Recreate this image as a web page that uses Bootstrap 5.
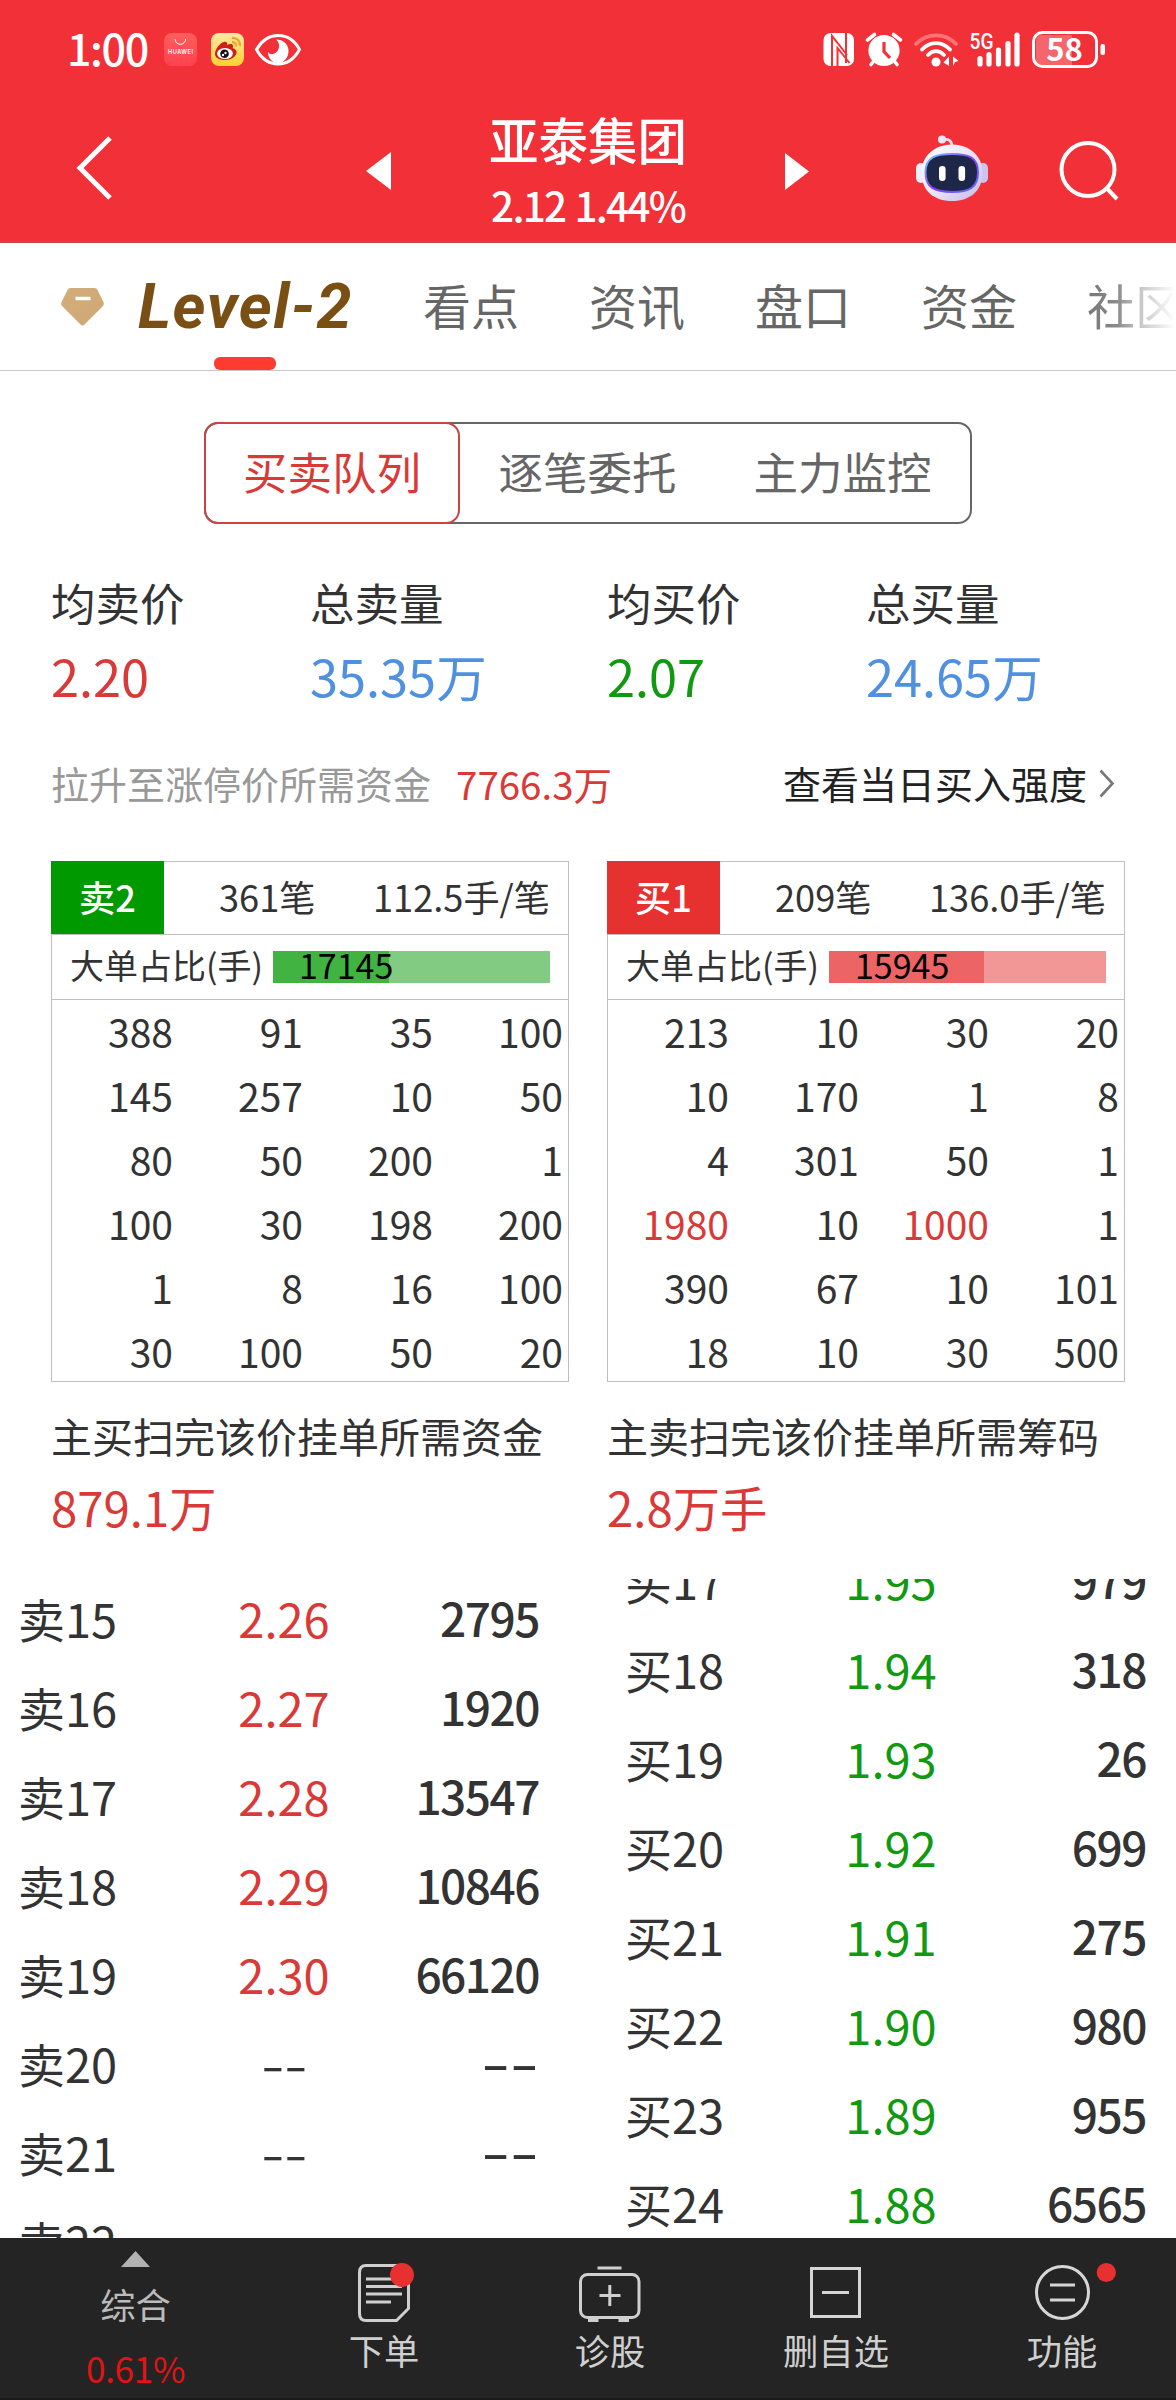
<!DOCTYPE html>
<html lang="zh-CN">
<head>
<meta charset="utf-8">
<meta name="viewport" content="width=device-width, initial-scale=1">
<title>亚泰集团 Level-2</title>
<link href="https://cdn.jsdelivr.net/npm/bootstrap@5.3.0/dist/css/bootstrap.min.css" rel="stylesheet">
<style>
body{font-family:"Noto Sans CJK SC",sans-serif;color:#333;background:#fff;width:1176px;height:2400px;overflow:hidden;line-height:1}
svg{display:block;flex:none}
.c-up{color:#d93a38}.c-down{color:#119911}.c-blue{color:#4f91e0}
.app-top{background:#f23038;height:243px;border-bottom:1px solid #c9464c}
.status{height:100px;padding:0 71px 0 67px}
.clock{font-size:43px;font-weight:500;letter-spacing:-1.4px;line-height:60px;width:97px;margin-top:-6px}
.titlebar{height:141px;padding:0 57px 0 76px}
.stock{width:394px;font-weight:500}
.stock-name{font-size:49.5px;line-height:72px;margin-top:3px}
.stock-quote{font-size:40.5px;line-height:60px;letter-spacing:-1.8px;word-spacing:2px}
.tabs{height:128px;border-bottom:1px solid #c8c8c8;padding-left:61px}
.tabs a{font-size:48px;line-height:60px;color:#666;margin:-5px 0 0 70px;text-decoration:none;white-space:nowrap;flex:none}
.tabs .fade-out{background:linear-gradient(90deg,#777 0,#8a8a8a 30px,#c4c4c4 52px,#fff 88px);-webkit-background-clip:text;background-clip:text;color:transparent}
.tabs a.lv2{font:italic 700 63px/60px Roboto,sans-serif;color:#7a4f14;margin:1px 0 0 34px;width:215px;letter-spacing:1.5px}
.lv2-bar{left:214px;bottom:0;width:62px;height:13px;border-radius:6px;background:#ff3b30}
.seg{width:768px;height:102px;margin:51px 0 0 204px;border:2px solid #666;border-radius:14px;font-size:44.5px;color:#666}
.seg>div{flex:1 0 0;line-height:94px;text-align:center}
.seg>.on{color:#d93a38;border:2px solid #c94444;border-radius:14px;margin:-2px 0 -2px -2px;flex:0 0 256px}
.stats{padding:50px 0 0 51px;height:215px}
.stats>div{width:259px}.stats>div:nth-child(2){width:297px}
.stat-k{font-size:44.5px;line-height:56px}
.stat-v{font-size:50.5px;line-height:60px;margin-top:15px}
.need{font-size:38px;line-height:50px;height:122px;padding:19px 61px 0 51px}
.book{width:518px;height:521px;border:1px solid #bfbfbf;flex:none}
.book-head{height:73px;border-bottom:1px solid #bfbfbf;font-size:36.2px;line-height:68px}
.side-tag{width:113px;height:73px;margin:-1px 0 0 -1px;color:#fff;font-weight:500;text-align:center;line-height:70px}
.bg-sell{background:#090}.bg-buy{background:#e73131}
.big{height:65px;border-bottom:1px solid #bfbfbf;font-size:34px;line-height:60px;padding-left:18px}
.track{width:277px;height:32px;margin:16px 0 0 auto;margin-right:18px}
.track .fill{height:32px;line-height:27px;font-size:34px;color:#000;padding-left:26px;white-space:nowrap}
.sell .track{background:#82cb82}.sell .fill{background:#40b340}
.buy .track{background:#f29696}.buy .fill{background:#ec6464}
.lots{font-size:39px;line-height:64px;text-align:right;margin:-1px 5px 0 -9px}
.sweep{width:556px}
.sweep-k{font-size:41px;line-height:50px}
.sweep-v{font-size:47.3px;line-height:56px;margin-top:19px}
.ladder{height:659px;overflow:hidden;flex:none}
.lv{height:89px;line-height:89px;font-size:47px;display:flex}
.lv>:nth-child(1){width:201px}
.lv>:nth-child(2){width:130px;text-align:center}
.lv>:nth-child(3){flex:1;text-align:right;font-weight:500;font-size:46px;letter-spacing:-1.5px}
.dash i{display:inline-block;font-style:normal;transform:scaleX(1.42)}
.lv>:nth-child(3).dash{letter-spacing:0;line-height:86px}
.lv>:nth-child(3).dash i{transform:scaleX(1.75);transform-origin:right}
.dock{height:162px;background:#242424;color:#cfcfcf;font-size:35.3px;border-bottom:2px solid #1b1b1b}
.dock>div{width:226px;text-align:center}
.dock svg{margin:22px auto 0}
.dock .lbl{line-height:44px;margin-top:4px}
</style>
<script src="https://cdn.jsdelivr.net/npm/bootstrap@5.3.0/dist/js/bootstrap.bundle.min.js"></script>
</head>
<body>
<header class="app-top text-white">
  <div class="status d-flex align-items-center">
    <div class="clock">1:00</div>
    <svg width="138" height="38" viewBox="0 0 138 38">
      <defs>
        <linearGradient id="hw" x1="0" y1="0" x2="0" y2="1"><stop stop-color="#ff5f5c"/><stop offset="1" stop-color="#ff414f"/></linearGradient>
        <linearGradient id="wb" x1="0" y1="0" x2="0" y2="1"><stop stop-color="#ffe9a6"/><stop offset="1" stop-color="#ffd02e"/></linearGradient>
      </defs>
      <rect x="0" y="2" width="33" height="33" rx="8" fill="url(#hw)"/>
      <path d="M11 8a5.3 5.3 0 0 0 10.600 0" fill="none" stroke="#fff" stroke-width="1"/>
      <text x="16.500" y="22.500" text-anchor="middle" font-family="Inter" font-size="5.600" font-weight="600" fill="#fff" textLength="25">HUAWEI</text>
      <rect x="47" y="2" width="33" height="33" rx="8" fill="url(#wb)"/>
      <path d="M51 23c0-5 5-11 9-12 3-.6 3.500 1 3 3 3-1.500 6-1.500 6 1 0 1 0 1.500-.5 2 3 1 4.500 2.500 4 5-1 4-5.500 7-11 7s-10.500-2-10.500-6z" fill="#cf1f1a"/>
      <ellipse cx="61" cy="22.500" rx="7.800" ry="5.600" fill="#fff"/><circle cx="60.500" cy="22.800" r="4.300" fill="#111"/><circle cx="61.500" cy="22" r="1.200" fill="#fff"/><circle cx="59" cy="24" r="1.200" fill="#fff"/>
      <path d="M68 7c5-.5 8.500 3.500 8 8M68 11c3 0 4.500 2 4 4.500" fill="none" stroke="#e8a92c" stroke-width="2.300"/>
      <path d="M92.500 18.500C98 9 105 4.500 114 4.500s16.500 4.500 21.500 14C130 28.500 123 33 114 33s-16-4.500-21.500-14.500z" fill="none" stroke="#fff" stroke-width="3"/>
      <path d="M112 8.500c7 0 12.500 4.500 12.500 11.500 0 6-4 12-10.500 12-6 0-10-5-10-11 1.500 2 3 2.500 5 2 4-1 6.500-5 6-9-.2-2-1.200-4-3-5.500z" fill="#fff"/>
    </svg>
    <svg class="ms-auto" width="282" height="42" viewBox="823 29 282 42" fill="#fff">
      <rect x="823.500" y="33" width="30.500" height="33" rx="7"/>
      <path d="M832 66V36l15 19M837.500 66V48l12 15M846 33v30" fill="none" stroke="#f23038" stroke-width="2"/>
      <circle cx="884" cy="50.500" r="15.600"/><path d="M867.500 40l7-5.500M900.500 40l-7-5.500M871 64.500l4-5M897 64.500l-4-5" stroke="#fff" stroke-width="3.600" stroke-linecap="round"/>
      <path d="M884 42v9.500l6 6.500" fill="none" stroke="#f23038" stroke-width="3.200"/>
      <g fill="none" stroke="#fff" stroke-linecap="round" stroke-width="3.800"><path d="M916 44c11-11.500 29-11.500 40 0" stroke="#ff7378"/><path d="M922 49.500c8-8.500 20-8.500 28 0M928 55c5-5 11-5 16 0"/></g>
      <circle cx="936" cy="62" r="4.500"/><path d="M949 56.500v9.500l-5.500-3.500zM953 66v-9.500l5.500 4.500-3.500 1z"/>
      <text x="969.500" y="49" font-family="Roboto" font-size="22" font-weight="500" textLength="24" lengthAdjust="spacingAndGlyphs">5G</text>
      <path d="M980 58.500V64M989 54.500V64M998.500 50V64M1008 43.500V64M1017 35V64" stroke="#fff" stroke-width="5.200" stroke-linecap="round"/>
      <path d="M1042 35h30v30h-30q-6 0-6-7V42q0-7 6-7z" fill="#f4666b"/>
      <rect x="1033.500" y="32.500" width="63" height="34" rx="9" fill="none" stroke="#fff" stroke-width="3"/>
      <rect x="1100.500" y="44" width="4.500" height="11" rx="2"/>
      <text x="1064.500" y="61" text-anchor="middle" font-family="Noto Sans CJK SC" font-size="31" font-weight="700">58</text>
    </svg>
  </div>
  <div class="titlebar d-flex">
    <svg width="37" height="66" viewBox="0 0 37 66" style="margin-top:35px"><path d="M34 3L4 33l30 30" fill="none" stroke="#fff" stroke-width="5"/></svg>
    <svg width="25" height="38" viewBox="0 0 25 38" style="margin:52px 0 0 253px"><path d="M25 0v38L0 19z" fill="#fff"/></svg>
    <div class="stock text-center">
      <div class="stock-name">亚泰集团</div>
      <div class="stock-quote">2.12 1.44%</div>
    </div>
    <svg width="24" height="37" viewBox="0 0 24 37" style="margin-top:53px"><path d="M0 0v37l24-18.500z" fill="#fff"/></svg>
    <svg width="72" height="67" viewBox="0 0 72 67" style="margin:35px 0 0 107px">
      <defs><linearGradient id="rb" x1="0" y1="0" x2="1" y2="1"><stop stop-color="#fff"/><stop offset=".55" stop-color="#e7e3f8"/><stop offset="1" stop-color="#c3b8ec"/></linearGradient>
      <linearGradient id="rs" x1="0" y1="0" x2="1" y2="1"><stop stop-color="#6fd0ff"/><stop offset=".5" stop-color="#8a3df0"/><stop offset="1" stop-color="#5570ff"/></linearGradient></defs>
      <path d="M26 5c7-2 10 1 10 7" fill="none" stroke="#e3dcf5" stroke-width="2.800"/><circle cx="26" cy="4.500" r="4" fill="#eae6f8"/>
      <rect x="0" y="28" width="10" height="20" rx="5" fill="#efecfb"/><rect x="62" y="28" width="10" height="20" rx="5" fill="#cbc4ee"/>
      <path d="M36 9.500c17 0 30.500 11 30.500 28C66.500 56 54 66 36 66S5.500 56 5.500 37.500c0-17 13.500-28 30.500-28z" fill="url(#rb)"/>
      <path d="M36 19c16 0 26 3 26 18.500C62 52 54 57 36 57S9.500 52 9.500 37.500C9.500 22 20 19 36 19z" fill="#1e2748" stroke="url(#rs)" stroke-width="2"/>
      <rect x="23" y="31" width="6.600" height="15" rx="3.300" fill="#fff"/><rect x="42.500" y="31" width="6.600" height="15" rx="3.300" fill="#fff"/>
    </svg>
    <svg class="ms-auto" width="60" height="60" viewBox="0 0 60 60" style="margin-top:41px" fill="none" stroke="#fff" stroke-width="4"><circle cx="29" cy="28.500" r="26.500"/><path d="M47.500 47l10.500 11"/></svg>
  </div>
</header>

<nav class="tabs d-flex align-items-center position-relative overflow-hidden">
  <svg width="43" height="38" viewBox="0 0 43 38"><defs><linearGradient id="gd" x1="0" y1="0" x2="1" y2="1"><stop stop-color="#d2ae7b"/><stop offset="1" stop-color="#cfa773"/></linearGradient></defs><path d="M9.500 0h24q2 0 3 2l6 12q1 2-.5 4L24 36q-2.500 3-5 0L1 18q-1.500-2-.5-4l6-12q1-2 3-2z" fill="url(#gd)"/><path d="M14.500 10.500h15" stroke="#fff" stroke-width="3.500"/></svg>
  <a class="lv2" href="#">Level-2</a>
  <a href="#">看点</a><a href="#">资讯</a><a href="#">盘口</a><a href="#">资金</a><a href="#" class="fade-out">社区</a>
  <span class="lv2-bar position-absolute"></span>
</nav>

<div class="seg d-flex"><div class="on">买卖队列</div><div>逐笔委托</div><div>主力监控</div></div>

<section class="stats d-flex">
  <div><div class="stat-k">均卖价</div><div class="stat-v c-up">2.20</div></div>
  <div><div class="stat-k">总卖量</div><div class="stat-v c-blue">35.35万</div></div>
  <div><div class="stat-k">均买价</div><div class="stat-v c-down">2.07</div></div>
  <div><div class="stat-k">总买量</div><div class="stat-v c-blue">24.65万</div></div>
</section>

<section class="need d-flex">
  <span style="color:#999">拉升至涨停价所需资金</span>
  <span class="c-up" style="margin-left:25px;font-size:38.500px">7766.3万</span>
  <span class="ms-auto" style="color:#222">查看当日买入强度</span>
  <svg width="16" height="29" viewBox="0 0 16 29" style="margin:11px 0 0 12px"><path d="M1.500 1.500l12 13-12 13" fill="none" stroke="#777" stroke-width="2.600"/></svg>
</section>

<section class="d-flex" style="padding-left:51px;gap:38px">
  <div class="book sell">
    <div class="book-head d-flex"><div class="side-tag bg-sell">卖2</div><div style="margin-left:55px">361笔</div><div class="ms-auto" style="margin-right:18px">112.5手/笔</div></div>
    <div class="big d-flex"><span>大单占比(手)</span><div class="track"><div class="fill" style="width:42%">17145</div></div></div>
    <div class="lots row row-cols-4 g-0">
      <div>388</div><div>91</div><div>35</div><div>100</div>
      <div>145</div><div>257</div><div>10</div><div>50</div>
      <div>80</div><div>50</div><div>200</div><div>1</div>
      <div>100</div><div>30</div><div>198</div><div>200</div>
      <div>1</div><div>8</div><div>16</div><div>100</div>
      <div>30</div><div>100</div><div>50</div><div>20</div>
    </div>
  </div>
  <div class="book buy">
    <div class="book-head d-flex"><div class="side-tag bg-buy">买1</div><div style="margin-left:55px">209笔</div><div class="ms-auto" style="margin-right:18px">136.0手/笔</div></div>
    <div class="big d-flex"><span>大单占比(手)</span><div class="track"><div class="fill" style="width:56%">15945</div></div></div>
    <div class="lots row row-cols-4 g-0">
      <div>213</div><div>10</div><div>30</div><div>20</div>
      <div>10</div><div>170</div><div>1</div><div>8</div>
      <div>4</div><div>301</div><div>50</div><div>1</div>
      <div class="c-up">1980</div><div>10</div><div class="c-up">1000</div><div>1</div>
      <div>390</div><div>67</div><div>10</div><div>101</div>
      <div>18</div><div>10</div><div>30</div><div>500</div>
    </div>
  </div>
</section>

<section class="d-flex" style="padding:28px 0 0 51px;height:197px">
  <div class="sweep"><div class="sweep-k">主买扫完该价挂单所需资金</div><div class="sweep-v c-up">879.1万</div></div>
  <div class="sweep"><div class="sweep-k">主卖扫完该价挂单所需筹码</div><div class="sweep-v c-up">2.8万手</div></div>
</section>

<section class="d-flex">
  <div class="ladder" style="width:588px;padding:0 49px 0 18px">
    <div style="margin-top:-6px">
      <div class="lv"><span>卖15</span><span class="c-up">2.26</span><span>2795</span></div>
      <div class="lv"><span>卖16</span><span class="c-up">2.27</span><span>1920</span></div>
      <div class="lv"><span>卖17</span><span class="c-up">2.28</span><span>13547</span></div>
      <div class="lv"><span>卖18</span><span class="c-up">2.29</span><span>10846</span></div>
      <div class="lv"><span>卖19</span><span class="c-up">2.30</span><span>66120</span></div>
      <div class="lv"><span>卖20</span><span class="dash"><i>--</i></span><span class="dash"><i>--</i></span></div>
      <div class="lv"><span>卖21</span><span class="dash"><i>--</i></span><span class="dash"><i>--</i></span></div>
      <div class="lv"><span>卖22</span><span></span><span></span></div>
    </div>
  </div>
  <div class="ladder" style="width:588px;padding:0 30px 0 37px">
    <div style="margin-top:-44px">
      <div class="lv"><span>买17</span><span class="c-down">1.95</span><span>979</span></div>
      <div class="lv"><span>买18</span><span class="c-down">1.94</span><span>318</span></div>
      <div class="lv"><span>买19</span><span class="c-down">1.93</span><span>26</span></div>
      <div class="lv"><span>买20</span><span class="c-down">1.92</span><span>699</span></div>
      <div class="lv"><span>买21</span><span class="c-down">1.91</span><span>275</span></div>
      <div class="lv"><span>买22</span><span class="c-down">1.90</span><span>980</span></div>
      <div class="lv"><span>买23</span><span class="c-down">1.89</span><span>955</span></div>
      <div class="lv"><span>买24</span><span class="c-down">1.88</span><span>6565</span></div>
    </div>
  </div>
</section>

<footer class="dock d-flex">
  <div style="width:271px">
    <svg width="29" height="16" viewBox="0 0 29 16" style="margin-top:13px"><path d="M14.500 0L29 16H0z" fill="#b2b2b2"/></svg>
    <div style="line-height:44px;margin-top:15px;color:#bbb">综合</div>
    <div style="line-height:44px;margin-top:20px;color:#df1414;letter-spacing:-.4px">0.61%</div>
  </div>
  <div>
    <svg width="60" height="64" viewBox="354 2260 60 64" fill="none" stroke="#cfcfcf" stroke-width="3"><path d="M408.500 2280v28.500l-12 12h-30.500q-6.500 0-6.500-7v-41q0-7 6.500-7h36"/><path d="M366 2279h30M366 2286.500h36M366 2294h36M366 2302h25"/><circle cx="402" cy="2275" r="11.900" fill="#e73131" stroke="none"/></svg>
    <div class="lbl">下单</div>
  </div>
  <div>
    <svg width="62" height="64" viewBox="579 2260 62 64" fill="none" stroke="#cfcfcf" stroke-width="3"><rect x="580.500" y="2274.500" width="58.500" height="43" rx="7"/><path d="M597.500 2268h24M599.500 2295.500h21M609.800 2285v21"/><path d="M588 2320h10.500M618.500 2320h10.500" stroke-width="4"/></svg>
    <div class="lbl">诊股</div>
  </div>
  <div>
    <svg width="60" height="64" viewBox="806 2260 60 64" fill="none" stroke="#d6d6d6" stroke-width="3"><rect x="811.500" y="2268.500" width="48" height="48"/><path d="M822 2292.500h27"/></svg>
    <div class="lbl">删自选</div>
  </div>
  <div>
    <svg width="110" height="64" viewBox="1007 2260 110 64" fill="none" stroke="#d6d6d6" stroke-width="3"><circle cx="1062.500" cy="2292.500" r="26"/><path d="M1050 2285h25M1050 2300h25"/><circle cx="1106.300" cy="2272.500" r="9.600" fill="#e73131" stroke="none"/></svg>
    <div class="lbl">功能</div>
  </div>
</footer>
</body>
</html>
